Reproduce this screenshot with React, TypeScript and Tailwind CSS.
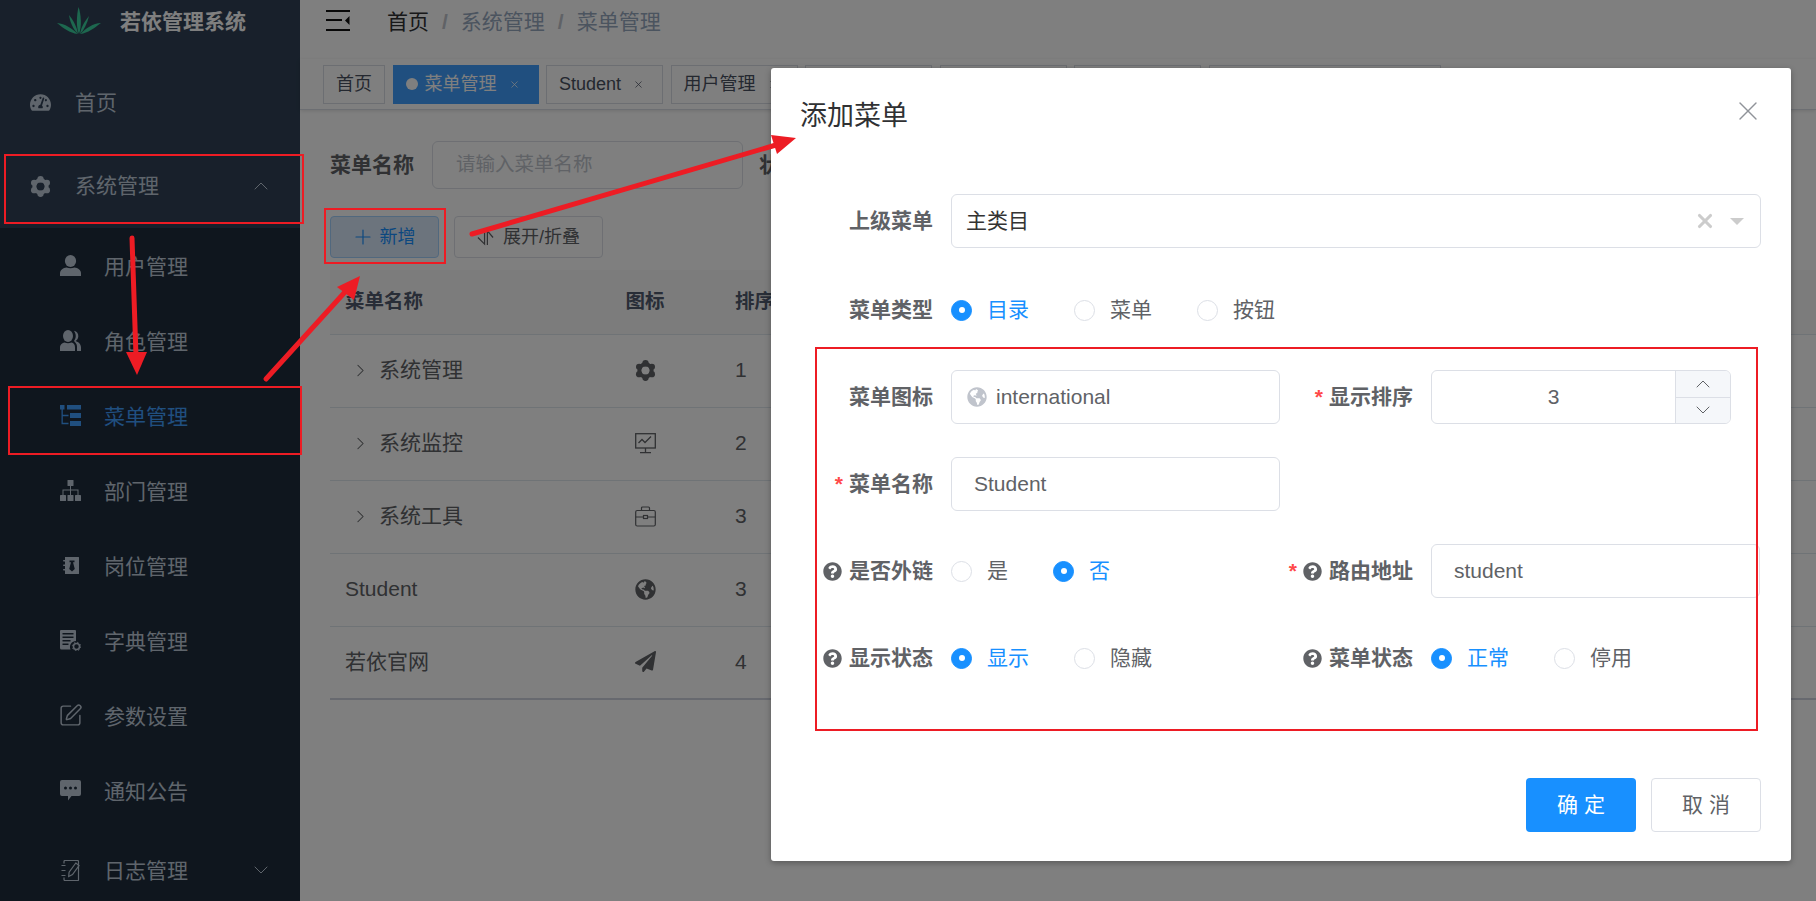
import type { ReactNode } from "react";
import { ChevronDown, ChevronRight, ChevronUp, Plus, SquarePen, X } from "lucide-react";
import { FaGlobeAmericas, FaPaperPlane, FaQuestionCircle, FaTachometerAlt } from "react-icons/fa";

const GearIcon = ({ className }: { className?: string }) => (
  <svg viewBox="0 0 24 24" className={className} fill="currentColor">
    <circle cx="12" cy="12" r="7" fill="none" stroke="currentColor" strokeWidth="4.600" />
    <circle cx="12" cy="3.600" r="3.600" />
    <circle cx="19.270" cy="7.800" r="3.600" />
    <circle cx="19.270" cy="16.200" r="3.600" />
    <circle cx="12" cy="20.400" r="3.600" />
    <circle cx="4.730" cy="16.200" r="3.600" />
    <circle cx="4.730" cy="7.800" r="3.600" />
  </svg>
);

const UserIcon = ({ className }: { className?: string }) => (
  <svg viewBox="0 0 21 21" className={className} fill="currentColor">
    <ellipse cx="10.5" cy="6" rx="5.6" ry="6" />
    <path d="M0 21v-2.5C0 14.8 3.5 13 6.5 12.6c2.5 1 5.500 1 8 0 3 .4 6.500 2.200 6.500 5.900V21Z" />
  </svg>
);

const PeoplesIcon = ({ className }: { className?: string }) => (
  <svg viewBox="0 0 21 21" className={className} fill="currentColor">
    <ellipse cx="8" cy="6" rx="5" ry="6" />
    <path d="M0 21v-3.500c0-3 2.500-4.500 4.500-5 2 1 5 1 7 0 2 .5 3.500 2 3.500 5V21Z" />
    <path d="M14 .8c3 .7 4.500 3 4.300 5.600-.2 2-1.300 3.600-2.800 4.600 3 1 5.500 3 5.500 6.500V21h-4v-4.500c0-2.500-1.500-4-3-5.500 2.200-2.800 2.500-6.500 0-10.200Z" />
  </svg>
);

const TreeTableIcon = ({ className }: { className?: string }) => (
  <svg viewBox="0 0 21 21" className={className} fill="currentColor">
    <rect x="0" y="0" width="4.500" height="4.500" />
    <rect x="7" y="0" width="14" height="4.500" />
    <rect x="10" y="8" width="11" height="5" />
    <rect x="10" y="16" width="11" height="5" />
    <path d="M1.500 4h1.300v5.800H8.500v1.400H2.800v6.600H8.500v1.400H1.500Z" />
  </svg>
);

const TreeIcon = ({ className }: { className?: string }) => (
  <svg viewBox="0 0 21 21" className={className} fill="currentColor">
    <rect x="7.500" y="0" width="6" height="6" rx=".6" />
    <rect x="0" y="15" width="6" height="6" rx=".6" />
    <rect x="7.500" y="15" width="6" height="6" rx=".6" />
    <rect x="15" y="15" width="6" height="6" rx=".6" />
    <path d="M10 6h1v3.500h7.500V15h-1v-4.500h-6.500V15h-1v-4.500H3.500V15h-1V9.500H10Z" />
  </svg>
);

const PostIcon = ({ className }: { className?: string }) => (
  <svg viewBox="0 0 21 21" className={className}>
    <path fill="currentColor" fillRule="evenodd" d="M5 2h13.500a.5.500 0 0 1 .5.500v16a.5.500 0 0 1-.5.500H5Zm4.500 3.500v1.800h1.500l-1.800 6.700 2.800 2.500 2.800-2.500-1.800-6.700H14.500V5.500Z" />
    <rect x="3" y="5" width="3" height="1.600" fill="currentColor" rx=".8" />
    <rect x="3" y="9.500" width="3" height="1.600" fill="currentColor" rx=".8" />
    <rect x="3" y="14" width="3" height="1.600" fill="currentColor" rx=".8" />
  </svg>
);

const DictIcon = ({ className }: { className?: string }) => (
  <svg viewBox="0 0 21 21" className={className} fill="none" stroke="currentColor">
    <path fill="currentColor" stroke="none" fillRule="evenodd" d="M1 0h14a1 1 0 0 1 1 1v10a6 6 0 0 0-5.500 8.500H1.500A1.500 1.500 0 0 1 0 18V1a1 1 0 0 1 1-1Zm1.500 3v1.500h11V3Zm0 3.500V8h11V6.500Zm0 3.500v1.500h8V10Zm0 3.500V15h6v-1.500Z" />
    <circle cx="16.500" cy="16.500" r="3" strokeWidth="1.500" />
    <circle cx="16.500" cy="16.500" r="4.200" strokeWidth="1" strokeDasharray="1.500 1.800" />
  </svg>
);

const LogIcon = ({ className }: { className?: string }) => (
  <svg viewBox="0 0 21 21" className={className} fill="none" stroke="currentColor" strokeWidth="1.200">
    <path d="M4 3.500V1.500a1 1 0 0 1 1-1h12.500a1 1 0 0 1 1 1V20a.6.6 0 0 1-.6.6H5a1 1 0 0 1-1-1v-2" />
    <path d="M1.500 5.500h4M1.500 10.500h4M1.500 15.500h4" />
    <path d="M15.800 3 19 5.500l-6.500 9-3.800 2 .4-4.300Z" />
  </svg>
);

const MessageIcon = ({ className }: { className?: string }) => (
  <svg viewBox="0 0 21 21" className={className}>
    <path fill="currentColor" fillRule="evenodd" d="M2 0h17a2 2 0 0 1 2 2v12a2 2 0 0 1-2 2h-7.500L8 20.500V16H2a2 2 0 0 1-2-2V2a2 2 0 0 1 2-2Zm3.500 6.500a1.500 1.500 0 1 0 0 3 1.500 1.500 0 0 0 0-3Zm5 0a1.500 1.500 0 1 0 0 3 1.500 1.500 0 0 0 0-3Zm5 0a1.500 1.500 0 1 0 0 3 1.500 1.500 0 0 0 0-3Z" />
  </svg>
);

const MonitorIcon = ({ className }: { className?: string }) => (
  <svg viewBox="0 0 21 21" className={className} fill="none" stroke="currentColor" strokeWidth="1.300">
    <rect x=".7" y=".7" width="19.600" height="14.300" />
    <path d="M10.500 15v4M5 19.700h11M3.500 10l3.500-3.500 3 3 6-6" />
  </svg>
);

const ToolIcon = ({ className }: { className?: string }) => (
  <svg viewBox="0 0 21 21" className={className} fill="none" stroke="currentColor" strokeWidth="1.200">
    <rect x=".7" y="4.500" width="19.600" height="15.500" rx="1.500" />
    <path d="M6.500 4.500V2a1 1 0 0 1 1-1h6a1 1 0 0 1 1 1v2.500M.7 11h7.800M12.500 11h7.800" />
    <rect x="8.500" y="9.500" width="4" height="3" />
  </svg>
);

const SortIcon = ({ className }: { className?: string }) => (
  <svg viewBox="0 0 18 18" className={className} fill="none" stroke="currentColor" strokeWidth="1.300">
    <path d="M8 1v15L1 9M11 17V2l6 7" />
  </svg>
);

const HamburgerIcon = ({ className }: { className?: string }) => (
  <svg viewBox="0 0 24 21" className={className} fill="currentColor">
    <rect x="0" y="0" width="24" height="2" />
    <rect x="0" y="9" width="16" height="2" />
    <rect x="0" y="19" width="24" height="2" />
    <path d="M23.500 6v9l-4.500-4.500Z" />
  </svg>
);

const Logo = () => (
  <svg viewBox="0 0 44 28" className="mt-[-3px] h-[28px] w-[44px]" fill="#3bd09e">
    <path d="M22 27C19 20 19.500 9 21.500 0c2.500 7 3.500 19 .5 27Z" />
    <path d="M21 27C16 22 13 15 12 8c4 5 8 12 9 19Z" />
    <path d="M23 27c4-4 7-10 9-18-4 5-8 11-9 18Z" />
    <path d="M20.500 27C13 26 6 21 0 16c8 1 15 5 20.500 11Z" />
    <path d="M23.500 27c7-1 14-6 20.500-11-8 .5-15 5-20.500 11Z" />
  </svg>
);

const SubItem = ({ icon, label, active }: { icon: ReactNode; label: string; active?: boolean }) => (
  <div className={`flex h-[75px] items-center pl-[60px] text-[21px] ${active ? "text-[#409eff]" : "text-[#bfcbd9]"}`}>
    <span className="mr-[23px] flex h-[21px] w-[21px] shrink-0 items-center justify-center">{icon}</span>
    <span className="mt-[2px]">{label}</span>
  </div>
);

const Sidebar = () => (
  <aside className="flex h-[960px] w-[300px] shrink-0 flex-col bg-[#1f2d3d] mt-[-16px]">
    <div className="flex h-[76px] shrink-0 items-center bg-[#304156] pl-[57px]">
      <Logo />
      <span className="ml-[19px] text-[21px] font-bold text-white">若依管理系统</span>
    </div>
    <div className="flex h-[84px] shrink-0 items-center bg-[#304156] pl-[30px] text-[21px] text-[#bfcbd9]">
      <FaTachometerAlt className="mr-[24px] h-[21px] w-[21px]" />
      <span className="mt-[2px]">首页</span>
    </div>
    <div className="flex h-[84px] shrink-0 items-center bg-[#304156] pl-[30px] pr-[27px] text-[21px] text-[#bfcbd9]">
      <GearIcon className="mr-[24px] h-[21px] w-[21px]" />
      系统管理
      <ChevronUp className="ml-auto h-[24px] w-[24px]" strokeWidth={1} />
    </div>
    <SubItem icon={<UserIcon className="h-[21px] w-[21px]" />} label="用户管理" />
    <SubItem icon={<PeoplesIcon className="h-[21px] w-[21px]" />} label="角色管理" />
    <SubItem icon={<TreeTableIcon className="h-[21px] w-[21px]" />} label="菜单管理" active />
    <SubItem icon={<TreeIcon className="h-[21px] w-[21px]" />} label="部门管理" />
    <SubItem icon={<PostIcon className="h-[21px] w-[21px]" />} label="岗位管理" />
    <SubItem icon={<DictIcon className="h-[21px] w-[21px]" />} label="字典管理" />
    <SubItem icon={<SquarePen className="h-[25px] w-[25px] shrink-0" strokeWidth={1.4} />} label="参数设置" />
    <SubItem icon={<MessageIcon className="h-[21px] w-[21px]" />} label="通知公告" />
    <div className="flex h-[84px] shrink-0 items-center pl-[60px] pr-[27px] text-[21px] text-[#bfcbd9]">
      <LogIcon className="mr-[23px] h-[21px] w-[21px]" />
      <span className="mt-[2px]">日志管理</span>
      <ChevronDown className="ml-auto h-[24px] w-[24px]" strokeWidth={1} />
    </div>
  </aside>
);

const Tab = ({ label, active, closable = true }: { label: string; active?: boolean; closable?: boolean }) => (
  <div
    className={`flex h-[39px] shrink-0 items-center border px-[12px] text-[18px] ${
      active ? "border-[#409eff] bg-[#409eff] text-white" : "border-[#d8dce5] bg-white text-[#495060]"
    }`}
  >
    {active && <span className="mr-[7px] h-[12px] w-[12px] rounded-full bg-white" />}
    {label}
    {closable && <X className="ml-[12px] mr-[6px] h-[11px] w-[11px]" strokeWidth={1.6} />}
  </div>
);

const TopBars = () => (
  <>
    <div className="flex h-[59px] items-center bg-white pb-[15px] pl-[26px]">
      <HamburgerIcon className="mt-[-3px] h-[21px] w-[24px] text-[#111]" />
      <div className="ml-[37px] flex items-center text-[21px] text-[#97a8be]">
        <span className="text-[#303133]">首页</span>
        <span className="mx-[13px] font-bold text-[#c0c4cc]">/</span>
        <span>系统管理</span>
        <span className="mx-[13px] font-bold text-[#c0c4cc]">/</span>
        <span>菜单管理</span>
      </div>
    </div>
    <div className="flex h-[51px] items-center gap-[7.5px] border-b border-[#d8dce5] bg-white pl-[23px] shadow-[0_1px_4px_rgba(0,0,0,0.12)]">
      <Tab label="首页" closable={false} />
      <Tab label="菜单管理" active />
      <Tab label="Student" />
      <Tab label="用户管理" />
      <Tab label="角色管理" />
      <Tab label="部门管理" />
      <Tab label="岗位管理" />
      <div className="h-[39px] w-[232px] shrink-0 border border-[#d8dce5] bg-white" />
    </div>
  </>
);

const rows: { name: string; tree: boolean; icon: ReactNode; sort: number }[] = [
  { name: "系统管理", tree: true, icon: <GearIcon className="h-[21px] w-[21px]" />, sort: 1 },
  { name: "系统监控", tree: true, icon: <MonitorIcon className="h-[21px] w-[21px]" />, sort: 2 },
  { name: "系统工具", tree: true, icon: <ToolIcon className="h-[21px] w-[21px]" />, sort: 3 },
  { name: "Student", tree: false, icon: <FaGlobeAmericas className="h-[21px] w-[21px]" />, sort: 3 },
  { name: "若依官网", tree: false, icon: <FaPaperPlane className="h-[21px] w-[21px]" />, sort: 4 },
];

const Content = () => (
  <div className="pl-[30px] pt-[31px]">
    <div className="flex h-[48px] items-center text-[21px]">
      <span className="font-bold text-[#606266]">菜单名称</span>
      <div className="ml-[18px] flex h-[48px] w-[311px] items-center rounded-[6px] border border-[#dcdfe6] bg-white pl-[23px] text-[19.5px] text-[#c0c4cc]">
        请输入菜单名称
      </div>
      <span className="ml-[16px] font-bold text-[#606266]">状态</span>
    </div>
    <div className="mt-[27px] flex h-[42px] gap-[15px]">
      <div className="flex w-[109px] items-center justify-center rounded-[4px] border border-[#a3d0fd] bg-[#d9e8fb] pr-[3px] text-[18px] text-[#1890ff]">
        <Plus className="mr-[5px] h-[24px] w-[24px]" strokeWidth={1.2} />
        新增
      </div>
      <div className="flex w-[149px] items-center justify-center rounded-[4px] border border-[#dcdfe6] bg-[#fff] text-[18px] text-[#606266]">
        <SortIcon className="mr-[9px] h-[17px] w-[17px]" />
        展开/折叠
      </div>
    </div>
    <div className="mt-[12px] text-[21px] text-[#606266]">
      <div className="flex h-[65px] items-center border-b border-[#dfe6ec] bg-[#f8f8f9] text-[19.5px] font-bold text-[#515a6e]">
        <span className="w-[270px] pl-[15px]">菜单名称</span>
        <span className="w-[90px] text-center">图标</span>
        <span className="pl-[45px]">排序</span>
      </div>
      {rows.map((row, i) => (
        <div
          key={row.name}
          className={`flex h-[73px] items-center pb-[2px] ${i === rows.length - 1 ? "border-b-[2px] border-[#ced3de]" : "border-b border-[#dfe6ec]"}`}
        >
          <span className="flex w-[270px] items-center pl-[15px]">
            {row.tree && <ChevronRight className="ml-[5px] mr-[8px] h-[21px] w-[21px]" strokeWidth={1.2} />}
            {row.name}
          </span>
          <span className="flex w-[90px] justify-center">{row.icon}</span>
          <span className="pl-[45px]">{row.sort}</span>
        </div>
      ))}
    </div>
  </div>
);

const Label = ({ text, required, help }: { text: string; required?: boolean; help?: boolean }) => (
  <div className="flex h-[54px] w-[150px] shrink-0 items-center justify-end pr-[18px] text-[21px] font-bold text-[#606266]">
    {required && <span className="mr-[6px] text-[#ff4949]">*</span>}
    {help && <FaQuestionCircle className="mr-[7px] h-[19px] w-[19px]" />}
    {text}
  </div>
);

const Radio = ({ label, checked }: { label: string; checked?: boolean }) => (
  <div className={`mr-[45px] flex items-center text-[21px] ${checked ? "text-[#1890ff]" : "text-[#606266]"}`}>
    <span
      className={`mr-[15px] flex h-[21px] w-[21px] items-center justify-center rounded-full border ${
        checked ? "border-[#1890ff] bg-[#1890ff]" : "border-[#dcdfe6] bg-white"
      }`}
    >
      {checked && <span className="h-[6px] w-[6px] rounded-full bg-white" />}
    </span>
    {label}
  </div>
);

const Field = ({ children }: { children: ReactNode }) => (
  <div className="flex h-[54px] w-[329px] items-center rounded-[6px] border border-[#dcdfe6] bg-white px-[22px] text-[21px] text-[#606266]">
    {children}
  </div>
);

const Dialog = () => (
  <div className="absolute left-[771px] top-[68px] w-[1020px] rounded-[3px] bg-white shadow-[0_2px_6px_rgba(0,0,0,0.3)]">
    <div className="flex justify-between pb-[15px] pl-[29px] pr-[30px] pt-[30px]">
      <span className="text-[27px] leading-[36px] text-[#303133]">添加菜单</span>
      <X className="mr-[-3px] mt-[-3px] h-[32px] w-[32px] text-[#909399]" strokeWidth={1} />
    </div>
    <div className="flex flex-col gap-[33px] px-[30px] pb-[78px] pt-[45px]">
      <div className="flex">
        <Label text="上级菜单" />
        <div className="flex h-[54px] flex-1 items-center rounded-[6px] border border-[#dcdfe6] pl-[14px] pr-[16px] text-[21px] text-[#333]">
          主类目
          <X className="ml-auto h-[22px] w-[22px] text-[#ccc]" strokeWidth={3.4} />
          <span className="ml-[14px] h-0 w-0 border-x-[7px] border-t-[7px] border-x-transparent border-t-[#ccc]" />
        </div>
      </div>
      <div className="mt-[2px] flex items-center">
        <Label text="菜单类型" />
        <Radio label="目录" checked />
        <Radio label="菜单" />
        <Radio label="按钮" />
      </div>
      <div className="grid grid-cols-2 gap-y-[33px]">
        <div className="flex">
          <Label text="菜单图标" />
          <Field>
            <span className="-ml-[7px] flex items-center text-[#606266]">
              <FaGlobeAmericas className="mr-[9px] h-[20px] w-[20px] text-[#c0c4cc]" />
              international
            </span>
          </Field>
        </div>
        <div className="flex">
          <Label text="显示排序" required />
          <div className="flex h-[54px] w-[300px] overflow-hidden rounded-[6px] border border-[#dcdfe6] text-[21px] text-[#606266]">
            <div className="flex flex-1 items-center justify-center">3</div>
            <div className="flex w-[55px] flex-col border-l border-[#dcdfe6] bg-[#f5f7fa] text-[#606266]">
              <div className="flex flex-1 items-center justify-center border-b border-[#dcdfe6]">
                <ChevronUp className="h-[24px] w-[24px]" strokeWidth={1} />
              </div>
              <div className="flex flex-1 items-center justify-center">
                <ChevronDown className="h-[24px] w-[24px]" strokeWidth={1} />
              </div>
            </div>
          </div>
        </div>
        <div className="col-span-2 flex">
          <Label text="菜单名称" required />
          <Field>Student</Field>
        </div>
        <div className="flex items-center">
          <Label text="是否外链" help />
          <Radio label="是" />
          <Radio label="否" checked />
        </div>
        <div className="flex">
          <Label text="路由地址" required help />
          <Field>student</Field>
        </div>
        <div className="flex items-center">
          <Label text="显示状态" help />
          <Radio label="显示" checked />
          <Radio label="隐藏" />
        </div>
        <div className="flex items-center">
          <Label text="菜单状态" help />
          <Radio label="正常" checked />
          <Radio label="停用" />
        </div>
      </div>
    </div>
    <div className="flex justify-end gap-[15px] px-[30px] pb-[29px] pt-[15px] text-[21px]">
      <div className="flex h-[54px] w-[110px] items-center justify-center rounded-[4px] bg-[#1890ff] text-white">确 定</div>
      <div className="flex h-[54px] w-[110px] items-center justify-center rounded-[4px] border border-[#dcdfe6] text-[#606266]">取 消</div>
    </div>
  </div>
);

const Annotations = () => (
  <svg className="pointer-events-none absolute inset-0" width="1816" height="901" fill="none" stroke="#ed1c24" strokeWidth="2">
    <rect x="5" y="155" width="298" height="68" />
    <rect x="9" y="387" width="292" height="67" />
    <rect x="325" y="209" width="120" height="54" />
    <rect x="816" y="348" width="941" height="382" />
    <g strokeWidth="5" strokeLinecap="round">
      <path d="M132 238 136 356" />
      <path d="M266 379 345 292" />
      <path d="M472 234 776 145" />
    </g>
    <g fill="#ed1c24" stroke="none">
      <path d="M126 352 147 352 137 375Z" />
      <path d="M337 287 360 276 354 300Z" />
      <path d="M771 135 796 138 777 154Z" />
    </g>
  </svg>
);

export default function App() {
  return (
    <div className="relative flex h-[901px] w-[1816px] overflow-hidden bg-white [font-family:'Liberation_Sans','Noto_Sans_CJK_SC',sans-serif]">
      <Sidebar />
      <main className="min-w-0 flex-1">
        <TopBars />
        <Content />
      </main>
      <div className="absolute inset-0 bg-black/50" />
      <Dialog />
      <Annotations />
    </div>
  );
}
